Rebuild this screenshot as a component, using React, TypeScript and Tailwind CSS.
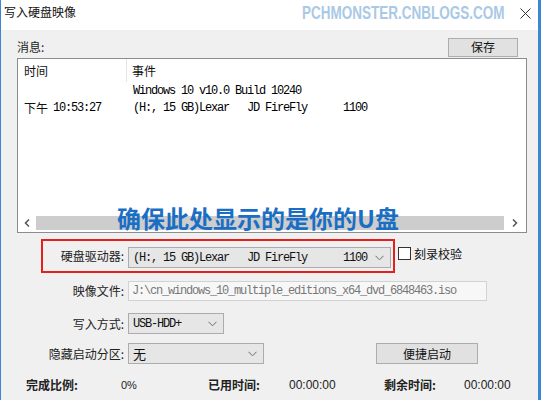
const CJK = "font-['Microsoft_YaHei','Noto_Sans_CJK_SC',sans-serif]";
const MONO = "font-['Liberation_Mono','Noto_Sans_CJK_SC',monospace] text-[12px] tracking-[-1.2px] whitespace-pre";

function Chevron() {
  return (
    <svg width="9" height="6" viewBox="0 0 9 6" className="shrink-0">
      <path d="M0.5 0.8 L4.5 4.8 L8.5 0.8" fill="none" stroke="#6a6a6a" strokeWidth="1" />
    </svg>
  );
}

function Select({ text, w, mono = true }: { text: string; w: string; mono?: boolean }) {
  return (
    <div
      className={`${w} h-[21px] flex items-center justify-between pl-[4px] pr-[6px] bg-[#e6e6e6] border border-[#acacac] text-[#111]`}
    >
      <span className={mono ? MONO : "text-[13px]"}>{text}</span>
      <Chevron />
    </div>
  );
}

function Label({ children }: { children: React.ReactNode }) {
  return <div className="w-[85px] pr-[4px] text-right text-[12px] text-[#222]">{children}</div>;
}

export default function App() {
  return (
    <div
      className={`${CJK} relative w-[541px] h-[400px] overflow-hidden bg-[#f0f0f0] border-l border-r-[3px] border-[#3b86d6] flex flex-col`}
    >
      {/* title bar */}
      <div className="h-[30px] bg-white flex items-start justify-between pl-[3px] pt-[3px] shrink-0">
        <span className="text-[12px] text-[#111] leading-[17px]">写入硬盘映像</span>
        <svg width="11" height="11" viewBox="0 0 11 11" className="mt-[5px] mr-[7px]">
          <path d="M0.5 0.5 L10.5 10.5 M10.5 0.5 L0.5 10.5" stroke="#333" strokeWidth="1" />
        </svg>
      </div>
      <div className="absolute left-[301px] top-[1px] origin-left scale-x-[0.75] font-['Liberation_Sans',sans-serif] font-bold text-[18px] text-[#a9c9e6] leading-[24px] whitespace-nowrap">
        PCHMONSTER.CNBLOGS.COM
      </div>

      {/* body */}
      <div className="flex flex-col pl-[16px] pr-[11px]">
        <div className="mt-[7px] h-[20px] flex items-center justify-between">
          <span className="text-[12px] text-[#222]">消息:</span>
          <button className="w-[70px] h-[19px] mr-[9px] bg-[#e1e1e1] border border-[#adadad] text-[12px] text-[#111] leading-none">
            保存
          </button>
        </div>

        {/* message list */}
        <div className="mt-[1px] h-[175px] bg-white border border-[#8c8c8c] flex flex-col">
          <div className="h-[23px] flex text-[12px] text-[#111] shrink-0">
            <div className="w-[109px] pl-[6px] border-r border-[#e5e5e5] flex items-center">时间</div>
            <div className="pl-[5px] flex items-center">事件</div>
          </div>
          <div className="flex mt-[1px] h-[15px] items-center">
            <div className="w-[115px]" />
            <span className={MONO}>Windows 10 v10.0 Build 10240</span>
          </div>
          <div className="flex mt-[2px] h-[15px] items-center">
            <div className="w-[115px] pl-[6px] flex items-center">
              <span className="text-[12px] text-[#111]">下午</span>
              <span className={`${MONO} ml-[5px]`}>10:53:27</span>
            </div>
            <span className={MONO}>{"(H:, 15 GB)Lexar   JD FireFly      1100"}</span>
          </div>
          <div className="flex-1" />
          <div className="h-[17px] flex items-center shrink-0 mb-[1px]">
            <div className="w-[18px] flex justify-center">
              <svg width="6" height="8" viewBox="0 0 6 8">
                <path d="M5 0.5 L1.5 4 L5 7.5" fill="none" stroke="#555" strokeWidth="1.5" />
              </svg>
            </div>
            <div className="flex-1 h-[14px] bg-[#cdcdcd]" />
            <div className="w-[22px] flex justify-center">
              <svg width="6" height="8" viewBox="0 0 6 8">
                <path d="M1 0.5 L4.5 4 L1 7.5" fill="none" stroke="#555" strokeWidth="1.5" />
              </svg>
            </div>
          </div>
        </div>

        {/* drive row */}
        <div className="mt-[6px] flex items-center">
          <div className="ml-[24px] w-[354px] h-[34px] border-2 border-[#e3201b] flex items-start pt-[6px]">
            <Label>硬盘驱动器:</Label>
            <Select text={"(H:, 15 GB)Lexar   JD FireFly      1100"} w="w-[263px]" />
          </div>
          <div className="ml-[3px] mt-[-5px] flex items-center">
            <div className="w-[13px] h-[13px] border border-[#333] bg-white" />
            <span className="ml-[3px] text-[12px] text-[#111]">刻录校验</span>
          </div>
        </div>

        <div className="mt-[8px] ml-[26px] flex items-center">
          <Label>映像文件:</Label>
          <div className="w-[359px] h-[20px] bg-[#f7f7f7] border border-[#d2d2d2] flex items-center pl-[3px]">
            <span className={`${MONO} text-[#777]`}>J:\cn_windows_10_multiple_editions_x64_dvd_6848463.iso</span>
          </div>
        </div>

        <div className="mt-[12px] ml-[26px] flex items-center">
          <Label>写入方式:</Label>
          <Select text="USB-HDD+" w="w-[96px]" />
        </div>

        <div className="mt-[9px] ml-[26px] flex items-center">
          <Label>隐藏启动分区:</Label>
          <Select text="无" w="w-[136px]" mono={false} />
          <button className="ml-[112px] w-[102px] h-[21px] bg-[#e1e1e1] border border-[#adadad] text-[12px] text-[#111] leading-none">
            便捷启动
          </button>
        </div>

        <div className="mt-[13px] ml-[9px] h-[16px] flex items-center text-[12px] text-[#222]">
          <span className="w-[95px] font-bold">完成比例:</span>
          <span className="w-[87px] font-['Liberation_Sans',sans-serif] text-[11px]">0%</span>
          <span className="w-[81px] font-bold">已用时间:</span>
          <span className="w-[95px] font-['Liberation_Sans',sans-serif]">00:00:00</span>
          <span className="w-[80px] font-bold">剩余时间:</span>
          <span className="font-['Liberation_Sans',sans-serif]">00:00:00</span>
        </div>
      </div>

      {/* overlay note */}
      <div className="absolute left-[116px] top-[202px] text-[24px] font-bold text-[#1a6fc4] leading-[32px] whitespace-nowrap">
        确保此处显示的是你的U盘
      </div>
    </div>
  );
}
